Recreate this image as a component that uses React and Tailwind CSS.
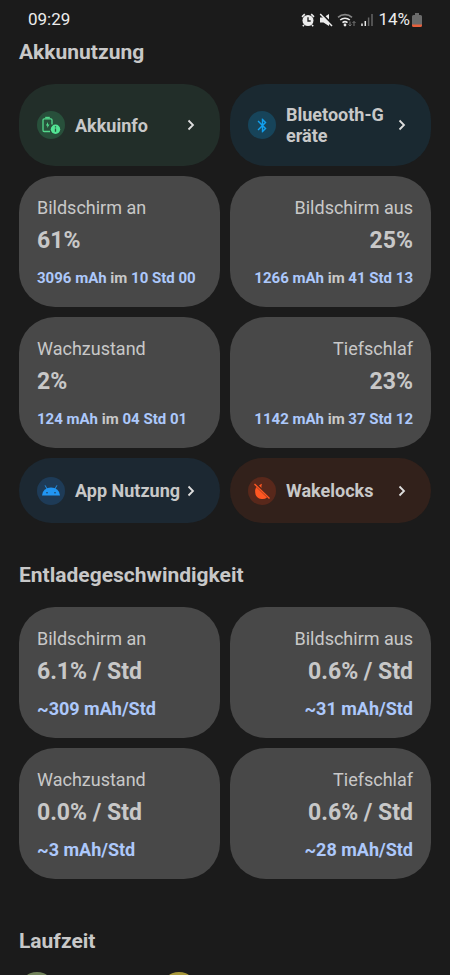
import { MdBluetooth } from 'react-icons/md';

const pageFont = 'font-[Roboto,"Liberation_Sans",sans-serif]';

const usageStats = [
  { label: 'Bildschirm an', value: '61%', mah: '3096 mAh', time: '10 Std 00' },
  { label: 'Bildschirm aus', value: '25%', mah: '1266 mAh', time: '41 Std 13' },
  { label: 'Wachzustand', value: '2%', mah: '124 mAh', time: '04 Std 01' },
  { label: 'Tiefschlaf', value: '23%', mah: '1142 mAh', time: '37 Std 12' },
];

const drainStats = [
  { label: 'Bildschirm an', value: '6.1% / Std', rate: '~309 mAh/Std' },
  { label: 'Bildschirm aus', value: '0.6% / Std', rate: '~31 mAh/Std' },
  { label: 'Wachzustand', value: '0.0% / Std', rate: '~3 mAh/Std' },
  { label: 'Tiefschlaf', value: '0.6% / Std', rate: '~28 mAh/Std' },
];

const BatteryInfoIcon = () => (
  <svg viewBox="0 0 20 20" className="w-5 h-5" fill="none">
    <path d="M9 16.5H3.2a1.2 1.2 0 0 1-1.2-1.2V5a1.2 1.2 0 0 1 1.2-1.2h6.6A1.2 1.2 0 0 1 11 5v4.5" stroke="#53d88c" strokeWidth="1.3" />
    <path d="M4.2 3.5V1.8h4.6v1.7z" fill="#53d88c" />
    <path d="M7 7 4.9 10.5h1.4V13l2.2-3.6H7z" fill="#53d88c" />
    <circle cx="14.5" cy="14.2" r="4.7" fill="#53e594" />
    <path d="M14.5 13.5v3.2M14.5 11.3v1.3" stroke="#28563f" strokeWidth="1.3" />
  </svg>
);

const AndroidIcon = () => (
  <svg viewBox="0 0 20 20" className="w-5 h-5">
    <path d="M1 14.5a9 8 0 0 1 18 0z" fill="#2196f3" />
    <path d="M6 8 4.3 4.7M14 8l1.7-3.3" stroke="#2196f3" strokeWidth="0.9" strokeLinecap="round" />
    <circle cx="6" cy="11.8" r="0.8" fill="#1e3b57" />
    <circle cx="14" cy="11.8" r="0.8" fill="#1e3b57" />
  </svg>
);

const WakelockIcon = () => (
  <svg viewBox="0 0 20 20" className="w-5 h-5">
    <path d="M4.2 6 15 16.5A7 7 0 0 1 9.5 18 6.5 6.5 0 0 1 3.2 11.5 9 9 0 0 1 4.2 6zM7 4.5A7 7 0 0 1 10 2.8 6.5 6.5 0 0 0 9.6 7z" fill="#ff5722" />
    <path d="M2.5 3 17.5 17.5" stroke="#ff5722" strokeWidth="1.4" />
  </svg>
);

const Chevron = () => (
  <svg viewBox="0 0 8 12" className="w-2 h-3 shrink-0" fill="none" stroke="#dedede" strokeWidth="1.8">
    <path d="M1.5 1.5 6 6l-4.5 4.5" />
  </svg>
);

const AlarmIcon = () => (
  <svg viewBox="0 0 14 14" className="w-[14px] h-[14px]">
    <circle cx="7" cy="7.5" r="5.5" fill="#ececec" />
    <path d="M1 3.8 3.8 1.2M13 3.8l-2.8-2.6M3 12l-1.2 1.3M11 12l1.2 1.3" stroke="#ececec" strokeWidth="1.6" />
    <path d="M7 4.3V8h2.7" fill="none" stroke="#1b1b1b" strokeWidth="1.3" />
  </svg>
);

const MuteIcon = () => (
  <svg viewBox="0 0 14 14" className="w-[14px] h-[14px]">
    <path d="M1 4.5h3.5L10 1v12L4.5 9.5H1z" fill="#ececec" />
    <path d="M2.5.5 14 12" stroke="#1b1b1b" strokeWidth="2" />
    <path d="M1.2 1 13 13" stroke="#ececec" strokeWidth="1.5" />
  </svg>
);

const WifiIcon = () => (
  <svg viewBox="0 0 20 14" className="w-5 h-[14px]" fill="none" strokeWidth="1.6">
    <path d="M1 4.3a10.5 10.5 0 0 1 14 0" stroke="#858585" />
    <path d="M3.2 7a7.3 7.3 0 0 1 9.6 0M5.5 9.6a4 4 0 0 1 5 0" stroke="#ececec" />
    <circle cx="8" cy="12" r="1.4" fill="#ececec" />
    <path d="M13 8.5V13m-1.5-1.5L13 13l1.5-1.5M17 13V8.5M15.5 10 17 8.5l1.5 1.5" stroke="#777" strokeWidth="1" />
  </svg>
);

const SignalIcon = () => (
  <svg viewBox="0 0 12 14" className="w-3 h-[14px]" strokeWidth="1.5">
    <path d="M1 10.5V13M4.3 8v5" stroke="#ececec" />
    <path d="M7.6 4.5V13M11 1v12" stroke="#666" />
  </svg>
);

const BatteryIcon = () => (
  <svg viewBox="0 0 10 14" className="w-[10px] h-[14px]">
    <path d="M3 0h4v2h1.5A1.5 1.5 0 0 1 10 3.5V12H0V3.5A1.5 1.5 0 0 1 1.5 2H3z" fill="#6b6b6b" />
    <path d="M0 11.5h10v1A1.5 1.5 0 0 1 8.5 14h-7A1.5 1.5 0 0 1 0 12.5z" fill="#e8603c" />
  </svg>
);

const StatusBar = () => (
  <header className="flex items-center justify-between h-10 px-7 text-[#ececec]">
    <span className="text-[17px]">09:29</span>
    <div className="flex items-center gap-1">
      <AlarmIcon />
      <MuteIcon />
      <WifiIcon />
      <SignalIcon />
      <div className="flex items-center gap-[2px] ml-px">
        <span className="text-[17px]">14%</span>
        <BatteryIcon />
      </div>
    </div>
  </header>
);

const LinkCard = ({ label, icon, color, iconColor, height }) => (
  <button type="button" className={`flex items-center rounded-[36px] pl-[18px] pr-[25px] text-left ${height} ${color}`}>
    <span className={`flex items-center justify-center w-7 h-7 shrink-0 rounded-full ${iconColor}`}>{icon}</span>
    <span className="flex-1 min-w-0 ml-[10px] mr-[6px] text-lg leading-[21px] font-bold break-all">{label}</span>
    <Chevron />
  </button>
);

const StatCard = ({ stat, right }) => (
  <div className={`flex flex-col rounded-[36px] bg-[#484848] h-[131px] px-[18px] pt-5 ${right ? 'text-right' : ''}`}>
    <div className="text-lg leading-6">{stat.label}</div>
    <div className="mt-[5px] text-[23px] leading-8 font-bold">{stat.value}</div>
    {stat.rate ? (
      <div className="mt-[9px] text-lg leading-6 font-bold text-[#adc8fb]">{stat.rate}</div>
    ) : (
      <div className="mt-[9px] text-[15px] leading-6 font-bold whitespace-nowrap">
        <span className="text-[#adc8fb]">{stat.mah}</span> im <span className="text-[#adc8fb]">{stat.time}</span>
      </div>
    )}
  </div>
);

const SectionTitle = ({ children }) => (
  <h2 className="text-[21px] leading-6 font-bold">{children}</h2>
);

export default function App() {
  return (
    <div className={`h-screen overflow-hidden bg-[#1b1b1b] text-[#c8c8c8] ${pageFont}`}>
      <StatusBar />
      <main className="px-[19px]">
        <SectionTitle>Akkunutzung</SectionTitle>
        <div className="grid grid-cols-2 gap-[10px] mt-5">
          <LinkCard label="Akkuinfo" icon={<BatteryInfoIcon />} height="h-[82px]" color="bg-[#222e29]" iconColor="bg-[#28503b]" />
          <LinkCard label="Bluetooth-Geräte" icon={<MdBluetooth size={17} color="#12a0ee" />} height="h-[82px]" color="bg-[#1a2931]" iconColor="bg-[#17445a]" />
          {usageStats.map((stat, i) => (
            <StatCard key={stat.label} stat={stat} right={i % 2 === 1} />
          ))}
          <LinkCard label="App Nutzung" icon={<AndroidIcon />} height="h-[65px]" color="bg-[#1c2832]" iconColor="bg-[#1e3b57]" />
          <LinkCard label="Wakelocks" icon={<WakelockIcon />} height="h-[65px]" color="bg-[#32211b]" iconColor="bg-[#58281b]" />
        </div>

        <div className="mt-10">
          <SectionTitle>Entladegeschwindigkeit</SectionTitle>
        </div>
        <div className="grid grid-cols-2 gap-[10px] mt-5">
          {drainStats.map((stat, i) => (
            <StatCard key={stat.label} stat={stat} right={i % 2 === 1} />
          ))}
        </div>

        <div className="mt-[50px]">
          <SectionTitle>Laufzeit</SectionTitle>
        </div>
        <div className="flex gap-[106px] mt-[19px] pb-4">
          <span className="w-9 h-9 rounded-full bg-[#71825a]" />
          <span className="w-9 h-9 rounded-full bg-[#a8983a]" />
        </div>
      </main>
    </div>
  );
}
